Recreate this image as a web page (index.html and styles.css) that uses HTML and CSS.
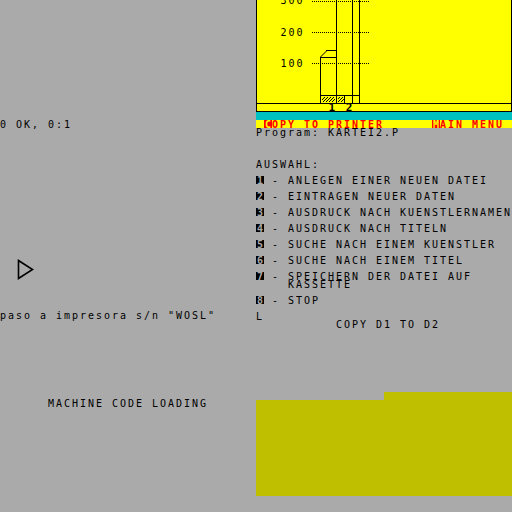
FILE: index.html
```html
<!DOCTYPE html>
<html>
<head>
<meta charset="utf-8">
<link rel="stylesheet" href="styles.css">
</head>
<body>
<div class="screen">
  <div class="col left">
    <div class="ln first">0 OK, 0:1</div>
    <svg class="play" width="20" height="22" viewBox="0 0 20 22">
      <polygon points="1.5,1.5 15.5,10.5 1.5,19.5" fill="none" stroke="#000" stroke-width="1.6"/>
    </svg>
    <div class="ln paso">paso a impresora s/n "WOSL"</div>
    <div class="ln mcl">MACHINE CODE LOADING</div>
  </div>
  <div class="col right">
    <svg class="chart" width="256" height="112" viewBox="0 0 256 112" shape-rendering="crispEdges">
      <defs>
        <pattern id="hatch" width="3" height="3" patternUnits="userSpaceOnUse">
          <rect x="0" y="0" width="1" height="1" fill="#000"/>
          <rect x="2" y="1" width="1" height="1" fill="#000"/>
          <rect x="1" y="2" width="1" height="1" fill="#000"/>
        </pattern>
      </defs>
      <rect x="0" y="0" width="256" height="112" fill="#ffff00"/>
      <g stroke="#000" stroke-width="1" fill="none">
        <line x1="0.5" y1="0" x2="0.5" y2="112"/>
        <line x1="255.5" y1="0" x2="255.5" y2="112"/>
        <line x1="0" y1="103.5" x2="256" y2="103.5"/>
        <line x1="0" y1="111.5" x2="256" y2="111.5"/>
        <line x1="80.5" y1="0" x2="80.5" y2="103"/>
        <line x1="96.5" y1="0" x2="96.5" y2="103"/>
        <line x1="103.5" y1="0" x2="103.5" y2="103"/>
        <line x1="64.5" y1="57" x2="64.5" y2="103"/>
        <line x1="64" y1="57.5" x2="80" y2="57.5"/>
        <line x1="70" y1="50.5" x2="80" y2="50.5"/>
        <line x1="64" y1="95.5" x2="104" y2="95.5"/>
        <line x1="88.5" y1="95" x2="88.5" y2="103"/>
      </g>
      <line x1="64.5" y1="57" x2="70.5" y2="51" stroke="#000" stroke-width="1" shape-rendering="auto"/>
      <g stroke="#000" stroke-width="1" stroke-dasharray="1 1">
        <line x1="56" y1="1.5" x2="113" y2="1.5"/>
        <line x1="56" y1="32.5" x2="113" y2="32.5"/>
        <line x1="56" y1="63.5" x2="113" y2="63.5"/>
      </g>
      <rect x="66" y="97" width="13" height="5" fill="url(#hatch)"/>
      <rect x="82" y="97" width="6" height="5" fill="url(#hatch)"/>
      <g class="ctext">
        <text x="24.5" y="3.5">300</text>
        <text x="24.5" y="35.5">200</text>
        <text x="24.5" y="66.5">100</text>
        <text x="72.5" y="110.5" class="bold">1 2</text>
      </g>
    </svg>
    <div class="cyan"></div>
    <div class="ln menu"> <span class="rinv">C</span>OPY TO PRINTER      <span class="rinv">M</span>AIN MENU</div>
    <div class="ln">Program: KARTEI2.P</div>
    <div class="ln"></div>
    <div class="ln"></div>
    <div class="ln"></div>
    <div class="ln">AUSWAHL:</div>
    <div class="ln"></div>
    <div class="ln"><span class="inv">1</span> - ANLEGEN EINER NEUEN DATEI</div>
    <div class="ln"></div>
    <div class="ln"><span class="inv">2</span> - EINTRAGEN NEUER DATEN</div>
    <div class="ln"></div>
    <div class="ln"><span class="inv">3</span> - AUSDRUCK NACH KUENSTLERNAMEN</div>
    <div class="ln"></div>
    <div class="ln"><span class="inv">4</span> - AUSDRUCK NACH TITELN</div>
    <div class="ln"></div>
    <div class="ln"><span class="inv">5</span> - SUCHE NACH EINEM KUENSTLER</div>
    <div class="ln"></div>
    <div class="ln"><span class="inv">6</span> - SUCHE NACH EINEM TITEL</div>
    <div class="ln"></div>
    <div class="ln"><span class="inv">7</span> - SPEICHERN DER DATEI AUF</div>
    <div class="ln">    KASSETTE</div>
    <div class="ln"></div>
    <div class="ln"><span class="inv">8</span> - STOP</div>
    <div class="ln"></div>
    <div class="ln">L</div>
    <div class="ln">          COPY D1 TO D2</div>
    <div class="yblock">
      <div class="ya"></div>
      <div class="yb"></div>
    </div>
  </div>
</div>
</body>
</html>
```

FILE: styles.css
```css
html, body {
  margin: 0;
  padding: 0;
  background: #aaaaaa;
}
.screen {
  width: 512px;
  height: 512px;
  display: grid;
  grid-template-columns: 256px 256px;
  background: #aaaaaa;
  overflow: hidden;
  font-family: "DejaVu Sans Mono", "Liberation Mono", monospace;
  font-size: 10px;
  letter-spacing: 1.98px;
  color: #000;
}
.col {
  display: flex;
  flex-direction: column;
  width: 256px;
}
.ln {
  height: 8px;
  line-height: 9px;
  white-space: pre;
  overflow: visible;
}
.left .first {
  margin-top: 120px;
}
.play {
  display: block;
  margin-top: 131px;
  margin-left: 17px;
}
.left .paso {
  margin-top: 30px;
}
.left .mcl {
  margin-top: 80px;
  padding-left: 48px;
}
.chart {
  display: block;
}
.ctext text {
  font-family: "DejaVu Sans Mono", "Liberation Mono", monospace;
  font-size: 10px;
  letter-spacing: 1.98px;
  fill: #000;
}
.ctext .bold {
  font-weight: bold;
  font-size: 11px;
}
.cyan {
  height: 8px;
  background: #00c0c0;
}
.menu {
  background: #ffff00;
  color: #ff0000;
  font-weight: bold;
}
.rinv {
  display: inline-block;
  width: 7px;
  padding-left: 1px;
  height: 8px;
  vertical-align: top;
  background: #ff0000;
  color: #ffff00;
  letter-spacing: 0;
}
.inv {
  display: inline-block;
  width: 7px;
  padding-left: 1px;
  height: 8px;
  vertical-align: top;
  background: #000;
  color: #aaaaaa;
  font-weight: bold;
  letter-spacing: 0;
}
.yblock {
  margin-top: 64px;
  display: flex;
  align-items: flex-end;
  height: 104px;
}
.ya {
  width: 128px;
  height: 96px;
  background: #bfbf00;
}
.yb {
  width: 128px;
  height: 104px;
  background: #bfbf00;
}
```
